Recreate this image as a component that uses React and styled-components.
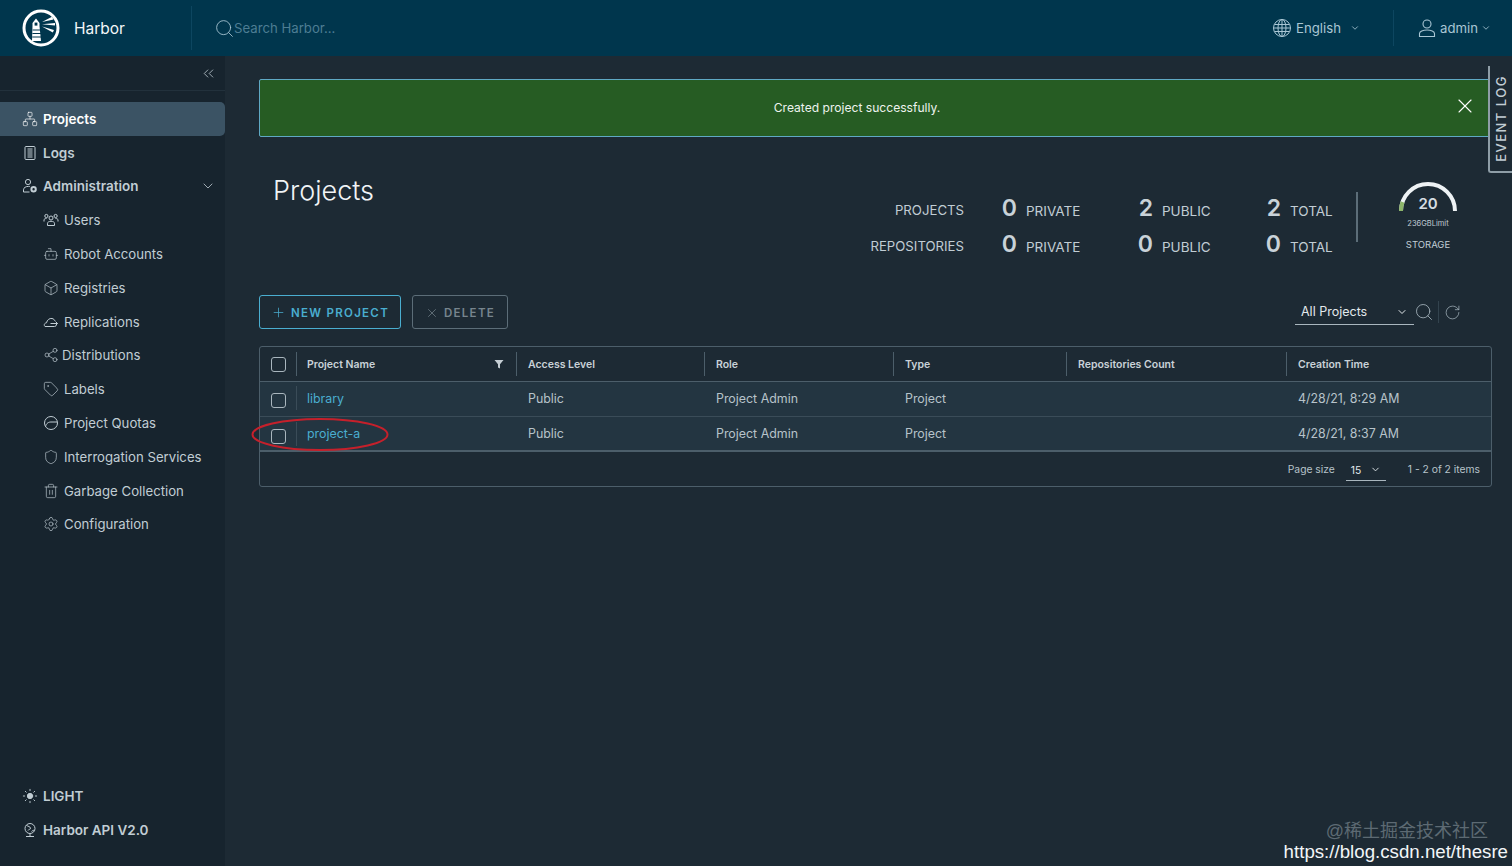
import React from "react";
import styled, { createGlobalStyle } from "styled-components";
import { Search, ChevronDown, ChevronsLeft, Plus, X, RotateCw, Network, Bot, Box, Share2, Tag, Shield, Trash2, Settings, Sun } from "lucide-react";

const GlobalStyle = createGlobalStyle`
  html, body { margin: 0; padding: 0; height: 100%; background: #1d2a34; }
  body { font-family: Inter, "Open Sans", "Liberation Sans", sans-serif; overflow: hidden; }
  * { box-sizing: border-box; }
`;

const COLUMNS = "36px 220px 188px 189px 173px 220px 1fr";

function LogoMark() {
  return (
    <svg width="38" height="38" viewBox="0 0 38 38">
      <circle cx="19" cy="19" r="17" fill="#00364d" stroke="#fff" strokeWidth="3" />
      <path d="M10.5 14 L14 9.5 L17.5 14 V17 L19 32 H10 L10.5 17 Z" fill="#fff" />
      <rect x="12.6" y="13.6" width="2.8" height="3" fill="#00364d" />
      <path d="M10.6 21h8M10.4 24.5h8.6M10.2 28h8.9" stroke="#00364d" strokeWidth="1.2" />
      <path d="M20 13 L30 7.8 L31.5 10.5 Z M20 15.2 L33 14 V16.6 Z M20 17.6 L32 21 L30.8 23.6 Z" fill="#fff" />
    </svg>
  );
}

function Line({ size = 16, children }) {
  return (
    <svg width={size} height={size} viewBox="0 0 16 16" fill="none" stroke="currentColor" strokeWidth="1">
      {children}
    </svg>
  );
}

const LogsIcon = () => (
  <Line>
    <rect x="3" y="1.5" width="10" height="13" rx="1" />
    <path d="M5.5 4h5M5.5 6h5M5.5 8h5M5.5 10h5M5.5 12h5" strokeWidth="1.2" />
  </Line>
);
const AdminIcon = () => (
  <Line>
    <circle cx="6" cy="4" r="2.6" />
    <path d="M1.5 14v-2.2C1.5 9.5 4 8.4 6.5 8.4c.6 0 1 0 1.5.2M1.5 14h6" />
    <circle cx="11.6" cy="11.2" r="2.2" strokeWidth="2" />
  </Line>
);
const UsersIcon = () => (
  <Line>
    <circle cx="8" cy="6" r="2" />
    <circle cx="3.4" cy="4" r="1.6" />
    <circle cx="12.6" cy="4" r="1.6" />
    <path d="M4.5 13.5v-2.2C4.5 10 6 9.3 8 9.3s3.5.7 3.5 2v2.2zM1 9.5V8c0-1 1-1.5 2.5-1.5M15 9.5V8c0-1-1-1.5-2.5-1.5" />
  </Line>
);
const CloudIcon = () => (
  <Line>
    <path d="M2 12.5c-1.5-1.5-.5-3.5 1.5-3.7C4 6 6.5 4 9 4.5c1.500.3 2.500 1.200 3 2.500M2 12.500h9.500c.8 0 1.500-.4 2-1" />
    <path d="M7.5 9.5h7M12.5 7.5l2 2-2 2" />
  </Line>
);
const QuotaIcon = () => (
  <Line>
    <circle cx="8" cy="8" r="6.5" />
    <path d="M2.5 11.5C3.5 8 5.5 7 8 7h6" />
  </Line>
);
const ApiIcon = () => (
  <Line>
    <circle cx="8" cy="6.5" r="5" />
    <path d="M4.5 3.5c2 1 3.5 1 4 2.500s-2 1-2.500 2.500M9.500 9.500c1-1 2-1.500 3-1M4 14.500h8M8 11.500v3" />
  </Line>
);
const GlobeIcon = () => (
  <svg width="20" height="20" viewBox="0 0 20 20" fill="none" stroke="currentColor" strokeWidth="1">
    <circle cx="10" cy="10" r="8.5" />
    <ellipse cx="10" cy="10" rx="4" ry="8.5" />
    <path d="M10 1.5v17M2.5 6.5h15M1.5 10h17M2.5 13.5h15" />
  </svg>
);
const UserIcon = () => (
  <svg width="20" height="20" viewBox="0 0 20 20" fill="none" stroke="currentColor" strokeWidth="1.1">
    <circle cx="10" cy="6" r="4" />
    <path d="M2.5 18.5v-3c0-2 3.5-3.5 7.5-3.5s7.5 1.5 7.5 3.500v3z" />
  </svg>
);
const FilterIcon = () => (
  <svg width="10" height="10" viewBox="0 0 10 10"><path d="M.5 1h9L6 5.2V9.5L4 8.5V5.2z" fill="#c5ced4" /></svg>
);
const GaugeIcon = () => (
  <svg width="62" height="32" viewBox="0 0 62 32" fill="none">
    <path d="M4 30A27 27 0 0 1 58 30" stroke="#eef2f4" strokeWidth="4" />
    <path d="M4 30A27 27 0 0 1 5.5 21" stroke="#8db56a" strokeWidth="4" />
  </svg>
);

const Page = styled.div`
  width: 1512px;
  height: 866px;
  display: flex;
  flex-direction: column;
  position: relative;
  overflow: hidden;
`;
const Header = styled.header`
  height: 56px;
  flex: none;
  background: #00364d;
  display: flex;
  align-items: center;
  color: #a9c6d4;
`;
const Brand = styled.div`
  width: 192px;
  height: 44px;
  padding-left: 22px;
  display: flex;
  align-items: center;
  gap: 14px;
  color: #f2f6f8;
  font-size: 15.5px;
  border-right: 1px solid #0d4660;
`;
const SearchBox = styled.div`
  flex: 1;
  padding-left: 22px;
  display: flex;
  align-items: center;
  font-size: 13.2px;
  color: #4d7d93;
  svg { color: #a9c6d4; flex: none; margin-right: -1px; }
`;
const HeaderItem = styled.div`
  display: flex;
  align-items: center;
  gap: ${(p) => p.$gap || 3}px;
  font-size: 13.2px;
`;
const LangBox = styled.div`
  width: 121px;
  height: 36px;
  display: flex;
  align-items: center;
`;
const UserBox = styled.div`
  width: 119px;
  height: 36px;
  padding-left: 23px;
  border-left: 1px solid #0d4660;
  display: flex;
  align-items: center;
`;
const Body = styled.div`
  flex: 1;
  display: flex;
  min-height: 0;
`;
const Sidebar = styled.aside`
  width: 225px;
  flex: none;
  background: #17242e;
  display: flex;
  flex-direction: column;
  color: #c1cdd4;
  font-size: 13.5px;
`;
const Collapse = styled.div`
  height: 35px;
  padding: 0 8px 0 0;
  display: flex;
  align-items: center;
  justify-content: flex-end;
  color: #b8c4cb;
  border-bottom: 1px solid #22313c;
`;
const Nav = styled.nav`
  padding-top: 11px;
  flex: 1;
  display: flex;
  flex-direction: column;
`;
const NavRow = styled.div`
  height: 33.8px;
  display: flex;
  align-items: center;
  flex: none;
  gap: ${(p) => (p.$tight ? 3 : 5)}px;
  padding-left: ${(p) => (p.$sub ? 43 : 22)}px;
  padding-right: 9px;
  font-size: ${(p) => (p.$sub ? 13.2 : 13.5)}px;
  font-weight: ${(p) => (p.$sub ? 400 : 600)};
  color: ${(p) => (p.$active ? "#fff" : "inherit")};
  background: ${(p) => (p.$active ? "#3b5364" : "transparent")};
  border-radius: ${(p) => (p.$active ? "0 5px 5px 0" : "0")};
  svg { flex: none; }
`;
const NavLabel = styled.span`
  flex: 1;
  white-space: nowrap;
`;
const NavFoot = styled.div`
  padding-bottom: 19px;
`;
const Main = styled.main`
  flex: 1;
  padding: 23px 20px 0 34px;
  min-width: 0;
  color: #c1cdd4;
`;
const Alert = styled.div`
  height: 58px;
  background: #265c23;
  border: 1px solid #5fa9c4;
  border-radius: 2px;
  display: flex;
  align-items: center;
  justify-content: center;
  position: relative;
  color: #eef3ee;
  font-size: 12.1px;
  padding: 0 37px 2px 0;
`;
const AlertClose = styled.span`
  position: absolute;
  right: 14px;
  top: 14px;
  display: flex;
  color: #fff;
`;
const TitleRow = styled.div`
  height: 158px;
  display: flex;
  justify-content: space-between;
  padding: 36px 0 0 14px;
`;
const Title = styled.h1`
  margin: 0;
  font-size: 27px;
  line-height: 36px;
  font-weight: 300;
  color: #f1f4f6;
`;
const StatsWrap = styled.div`
  display: flex;
  align-items: flex-start;
  padding-right: 36px;
`;
const StatsGrid = styled.div`
  display: grid;
  grid-template-columns: 106px 53px 73px 63px 65px 63px 66px;
  grid-auto-rows: 36px;
  margin-top: 19px;
  align-items: center;
  font-size: 13.2px;
`;
const StatLabel = styled.div`
  text-align: right;
  white-space: nowrap;
`;
const StatNum = styled.div`
  text-align: right;
  font-size: 23px;
  font-weight: 600;
  color: #c9d2d8;
  line-height: 1;
  margin-top: -3px;
`;
const StatWord = styled.div`
  padding-left: 9px;
  white-space: nowrap;
  margin-top: 2px;
  font-size: 13.5px;
`;
const Storage = styled.div`
  margin-left: 9px;
  width: 100px;
  height: 50px;
  margin-top: 19px;
  border-left: 2px solid #5c6d78;
  position: relative;
`;
const GaugeWrap = styled.div`
  position: absolute;
  top: -11px;
  left: 39px;
  width: 62px;
  display: flex;
  flex-direction: column;
  align-items: center;
`;
const GaugeNum = styled.div`
  position: absolute;
  top: 13px;
  font-size: 15px;
  font-weight: 600;
  color: #d5dde2;
`;
const GaugeLimit = styled.div`
  font-size: 7.5px;
  margin-top: 6px;
  white-space: nowrap;
`;
const GaugeLabel = styled.div`
  font-size: 9.5px;
  margin-top: 11px;
`;
const Toolbar = styled.div`
  display: flex;
  align-items: center;
  height: 34px;
  margin-bottom: 17px;
  gap: 11px;
`;
const ActionButton = styled.button`
  height: 34px;
  width: ${(p) => p.$w}px;
  background: transparent;
  border: 1px solid ${(p) => (p.$primary ? "#4aaed0" : "#5c6d78")};
  border-radius: 3px;
  color: ${(p) => (p.$primary ? "#4aaed0" : "#77858e")};
  font-family: inherit;
  font-size: 11.5px;
  font-weight: 600;
  letter-spacing: 1.3px;
  display: flex;
  align-items: center;
  justify-content: center;
  gap: 5px;
  padding: 1px 0 0;
`;
const ToolRight = styled.div`
  margin-left: auto;
  display: flex;
  align-items: center;
  margin-right: 31px;
  color: #a9b8c1;
`;
const FilterSelect = styled.div`
  width: 119px;
  height: 25px;
  padding: 0 6px;
  display: flex;
  align-items: center;
  justify-content: space-between;
  border-bottom: 1px solid #a9b6be;
  color: #e3e9ec;
  font-size: 12.5px;
`;
const RefreshBox = styled.div`
  height: 22px;
  margin-left: 4px;
  padding-left: 5px;
  border-left: 1px solid #33434e;
  display: flex;
  align-items: center;
`;
const Table = styled.div`
  border: 1px solid #4c5e6a;
  border-radius: 3px;
  height: 141px;
  display: flex;
  flex-direction: column;
`;
const HeadRow = styled.div`
  display: grid;
  grid-template-columns: ${COLUMNS};
  height: 35px;
  align-items: center;
  border-bottom: 1px solid #4c5e6a;
  font-size: 10.5px;
  font-weight: 600;
  color: #c9d2d8;
`;
const Row = styled.div`
  display: grid;
  grid-template-columns: ${COLUMNS};
  height: 35px;
  padding-bottom: ${(p) => (p.$last ? 0 : 2)}px;
  align-items: center;
  background: #233541;
  border-bottom: ${(p) => (p.$last ? "2px solid #4c5e6a" : "1px solid #3a4c58")};
  font-size: 12.4px;
  color: #b7c3ca;
`;
const CheckCell = styled.div`
  height: 24px;
  display: flex;
  justify-content: center;
  align-items: center;
`;
const Check = styled.span`
  width: 15px;
  height: 15px;
  border: 1px solid #a9b6be;
  border-radius: 3px;
  margin-top: ${(p) => (p.$row ? 5 : 0)}px;
`;
const Cell = styled.div`
  height: 24px;
  padding: 0 10px 0 11px;
  display: flex;
  align-items: center;
  justify-content: space-between;
  border-left: 1px solid ${(p) => (p.$head ? "#4c5e6a" : "transparent")};
  white-space: nowrap;
`;
const HeadNameCell = styled(Cell)`
  padding: 0 12px 0 10px;
`;
const NameCell = styled(Cell)`
  padding-left: 10px;
  border-left-color: #3a4c58;
  color: #4aaed0;
`;
const TableFoot = styled.div`
  flex: 1;
  display: flex;
  align-items: center;
  justify-content: flex-end;
  padding: 0 11px 0 0;
  font-size: 10.3px;
  color: #b7c3ca;
`;
const PageSelect = styled.div`
  width: 40px;
  height: 22px;
  margin: 2px 22px 0 11px;
  padding: 0 5px;
  display: flex;
  align-items: center;
  justify-content: space-between;
  border-bottom: 1px solid #a9b6be;
  color: #e3e9ec;
`;
const EventTab = styled.div`
  position: absolute;
  right: 0;
  top: 66px;
  width: 24px;
  height: 107px;
  background: #1d2a34;
  border-left: 2px solid #8f9ea7;
  border-bottom: 2px solid #8f9ea7;
  border-radius: 0 0 0 3px;
  color: #c1cdd4;
  font-size: 13px;
  font-weight: 500;
  letter-spacing: 1.5px;
  writing-mode: vertical-rl;
  display: flex;
  align-items: center;
  justify-content: center;
`;
const EventText = styled.span`
  transform: rotate(180deg);
  white-space: nowrap;
`;
const Marker = styled.svg`
  position: absolute;
  left: 250px;
  top: 417px;
`;
const Watermark = styled.div`
  position: absolute;
  right: 4px;
  bottom: 4px;
  text-align: right;
  font-family: "Liberation Sans", "Noto Sans CJK SC", sans-serif;
`;
const MarkTop = styled.div`
  color: #5d6a73;
  font-size: 18px;
  line-height: 20px;
  margin-right: 20px;
`;
const MarkBottom = styled.div`
  color: #f2f6f8;
  font-size: 18.7px;
  line-height: 21px;
`;

const navItems = [
  { label: "Users", icon: <UsersIcon /> },
  { label: "Robot Accounts", icon: <Bot size={16} strokeWidth={1} /> },
  { label: "Registries", icon: <Box size={16} strokeWidth={1} /> },
  { label: "Replications", icon: <CloudIcon /> },
  { label: "Distributions", icon: <Share2 size={16} strokeWidth={1} />, tight: true },
  { label: "Labels", icon: <Tag size={16} strokeWidth={1} /> },
  { label: "Project Quotas", icon: <QuotaIcon /> },
  { label: "Interrogation Services", icon: <Shield size={16} strokeWidth={1} /> },
  { label: "Garbage Collection", icon: <Trash2 size={16} strokeWidth={1} /> },
  { label: "Configuration", icon: <Settings size={16} strokeWidth={1} /> },
];

const rows = [
  { name: "library", time: "4/28/21, 8:29 AM" },
  { name: "project-a", time: "4/28/21, 8:37 AM" },
];

export default function App() {
  return (
    <Page>
      <GlobalStyle />
      <Header>
        <Brand>
          <LogoMark />
          <span>Harbor</span>
        </Brand>
        <SearchBox>
          <Search size={21} strokeWidth={1} />
          <span>Search Harbor...</span>
        </SearchBox>
        <LangBox>
          <HeaderItem $gap={4}>
            <GlobeIcon />
            <span>English</span>
            <ChevronDown size={10} style={{ marginLeft: 5 }} />
          </HeaderItem>
        </LangBox>
        <UserBox>
          <HeaderItem>
            <UserIcon />
            <span>admin</span>
            <ChevronDown size={10} />
          </HeaderItem>
        </UserBox>
      </Header>
      <Body>
        <Sidebar>
          <Collapse>
            <ChevronsLeft size={17} strokeWidth={1.2} />
          </Collapse>
          <Nav>
            <NavRow $active>
              <Network size={16} strokeWidth={1} />
              <NavLabel>Projects</NavLabel>
            </NavRow>
            <NavRow>
              <LogsIcon />
              <NavLabel>Logs</NavLabel>
            </NavRow>
            <NavRow>
              <AdminIcon />
              <NavLabel>Administration</NavLabel>
              <ChevronDown size={16} strokeWidth={1.2} />
            </NavRow>
            {navItems.map((item) => (
              <NavRow $sub $tight={item.tight} key={item.label}>
                {item.icon}
                <NavLabel>{item.label}</NavLabel>
              </NavRow>
            ))}
          </Nav>
          <NavFoot>
            <NavRow>
              <Sun size={16} fill="currentColor" strokeWidth={1.4} />
              <NavLabel>LIGHT</NavLabel>
            </NavRow>
            <NavRow>
              <ApiIcon />
              <NavLabel>Harbor API V2.0</NavLabel>
            </NavRow>
          </NavFoot>
        </Sidebar>
        <Main>
          <Alert>
            Created project successfully.
            <AlertClose>
              <X size={24} strokeWidth={1.1} />
            </AlertClose>
          </Alert>
          <TitleRow>
            <Title>Projects</Title>
            <StatsWrap>
              <StatsGrid>
                <StatLabel>PROJECTS</StatLabel>
                <StatNum>0</StatNum>
                <StatWord>PRIVATE</StatWord>
                <StatNum>2</StatNum>
                <StatWord>PUBLIC</StatWord>
                <StatNum>2</StatNum>
                <StatWord>TOTAL</StatWord>
                <StatLabel>REPOSITORIES</StatLabel>
                <StatNum>0</StatNum>
                <StatWord>PRIVATE</StatWord>
                <StatNum>0</StatNum>
                <StatWord>PUBLIC</StatWord>
                <StatNum>0</StatNum>
                <StatWord>TOTAL</StatWord>
              </StatsGrid>
              <Storage>
                <GaugeWrap>
                  <GaugeIcon />
                  <GaugeNum>20</GaugeNum>
                  <GaugeLimit>236GBLimit</GaugeLimit>
                  <GaugeLabel>STORAGE</GaugeLabel>
                </GaugeWrap>
              </Storage>
            </StatsWrap>
          </TitleRow>
          <Toolbar>
            <ActionButton $primary $w={142}>
              <Plus size={15} strokeWidth={1.2} />
              NEW PROJECT
            </ActionButton>
            <ActionButton $w={96}>
              <X size={14} strokeWidth={1.2} />
              DELETE
            </ActionButton>
            <ToolRight>
              <FilterSelect>
                <span>All Projects</span>
                <ChevronDown size={12} />
              </FilterSelect>
              <Search size={20} strokeWidth={1} />
              <RefreshBox>
                <RotateCw size={17} strokeWidth={1} />
              </RefreshBox>
            </ToolRight>
          </Toolbar>
          <Table>
            <HeadRow>
              <CheckCell>
                <Check />
              </CheckCell>
              <HeadNameCell $head>
                Project Name
                <FilterIcon />
              </HeadNameCell>
              <Cell $head>Access Level</Cell>
              <Cell $head>Role</Cell>
              <Cell $head>Type</Cell>
              <Cell $head>Repositories Count</Cell>
              <Cell $head>Creation Time</Cell>
            </HeadRow>
            {rows.map((row, i) => (
              <Row key={row.name} $last={i === rows.length - 1}>
                <CheckCell>
                  <Check $row />
                </CheckCell>
                <NameCell>{row.name}</NameCell>
                <Cell>Public</Cell>
                <Cell>Project Admin</Cell>
                <Cell>Project</Cell>
                <Cell />
                <Cell>{row.time}</Cell>
              </Row>
            ))}
            <TableFoot>
              <span>Page size</span>
              <PageSelect>
                <span>15</span>
                <ChevronDown size={11} />
              </PageSelect>
              <span>1 - 2 of 2 items</span>
            </TableFoot>
          </Table>
        </Main>
      </Body>
      <EventTab>
        <EventText>EVENT LOG</EventText>
      </EventTab>
      <Marker width="140" height="36" viewBox="0 0 140 36" fill="none">
        <ellipse cx="70" cy="17.5" rx="67.5" ry="15.5" stroke="#c5202b" strokeWidth="2" />
      </Marker>
      <Watermark>
        <MarkTop>@稀土掘金技术社区</MarkTop>
        <MarkBottom>https://blog.csdn.net/thesre</MarkBottom>
      </Watermark>
    </Page>
  );
}
